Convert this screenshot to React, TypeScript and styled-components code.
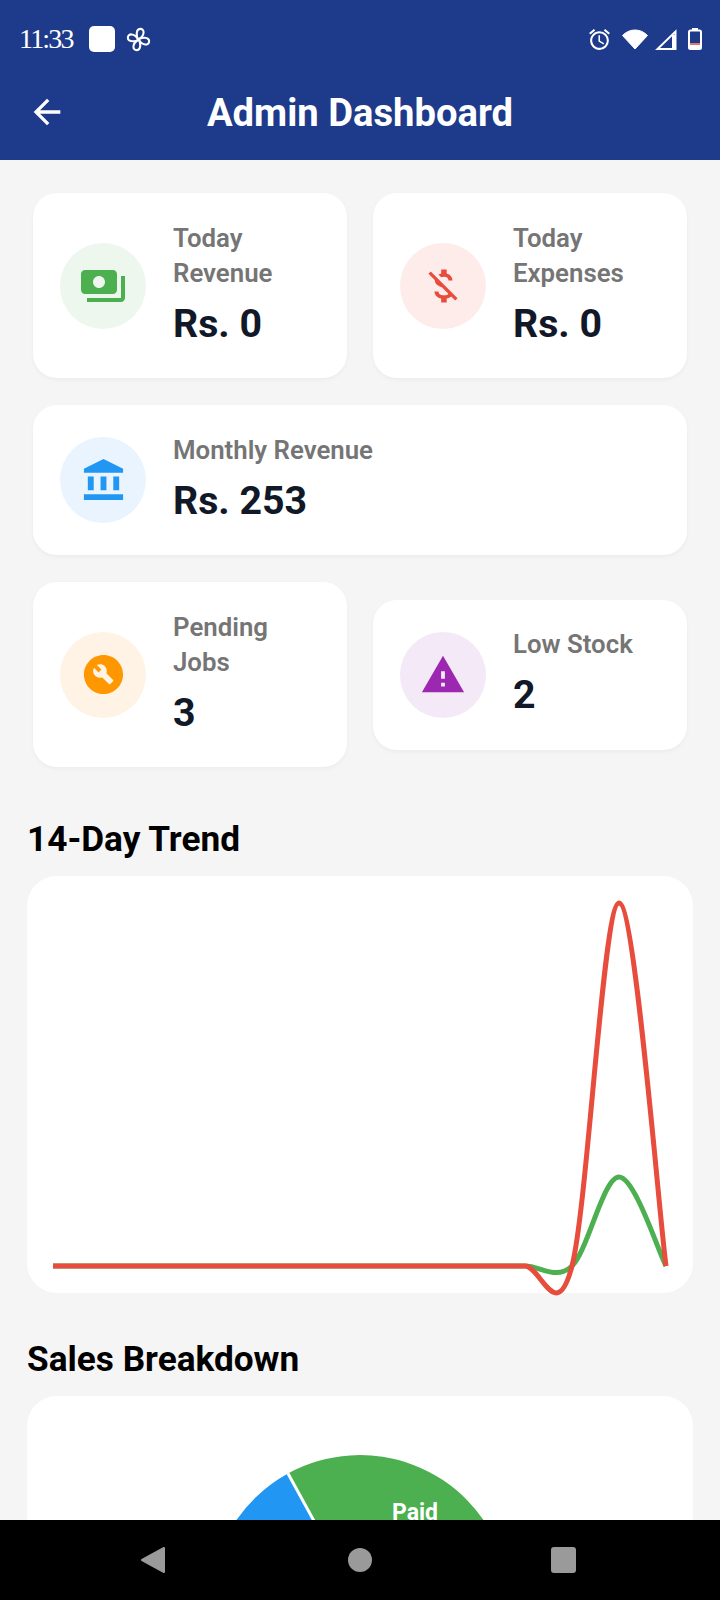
import React from "react";
import styled, { createGlobalStyle } from "styled-components";
import {
  MdAccountBalance,
  MdAlarm,
  MdArrowBack,
  MdBuildCircle,
  MdMoneyOff,
  MdPayments,
  MdWarning,
} from "react-icons/md";

const GlobalStyle = createGlobalStyle`
  html, body {
    margin: 0;
    padding: 0;
    background: #f5f5f5;
  }
  body {
    font-family: Roboto, "Liberation Sans", sans-serif;
  }
`;

const Screen = styled.div`
  width: 720px;
  height: 1600px;
  display: flex;
  flex-direction: column;
  overflow: hidden;
`;

const Header = styled.header`
  height: 160px;
  flex: none;
  background: #1e3a8a;
  color: #fff;
  display: flex;
  flex-direction: column;
`;

const StatusBar = styled.div`
  height: 78px;
  padding: 0 18px 0 19px;
  display: flex;
  align-items: center;
  svg {
    display: block;
  }
`;

const Time = styled.span`
  font-family: "Liberation Serif", serif;
  font-size: 28px;
  letter-spacing: -1.8px;
  margin-right: 16px;
`;

const WhiteSquare = styled.span`
  width: 26px;
  height: 26px;
  border-radius: 5px;
  background: #fff;
  margin-right: 11px;
`;

const StatusRight = styled.div`
  margin-left: auto;
  display: flex;
  align-items: center;
`;

const StatusSlot = styled.span<{ $gap: number }>`
  margin-left: ${(p) => p.$gap}px;
`;

const Toolbar = styled.div`
  flex: 1;
  position: relative;
  display: flex;
  align-items: center;
  justify-content: center;
  padding-bottom: 12px;
`;

const BackButton = styled.span`
  position: absolute;
  left: 27px;
  top: 14px;
  display: flex;
`;

const Title = styled.h1`
  margin: 0;
  font-size: 38.2px;
  font-weight: 700;
`;

const Content = styled.main`
  flex: 1;
  min-height: 0;
  overflow: hidden;
  padding: 33px 27px 0;
`;

const Row = styled.div`
  display: flex;
  align-items: center;
  gap: 26px;
  margin: 0 6px 27px;
`;

const Card = styled.div`
  flex: 1 1 0;
  min-width: 0;
  background: #fff;
  border-radius: 24px;
  padding: 27.5px 27px;
  display: flex;
  align-items: center;
  gap: 27px;
  box-shadow: 0 2px 4px rgba(0, 0, 0, 0.04);
`;

const IconCircle = styled.div<{ $bg: string; $fg: string }>`
  width: 86px;
  height: 86px;
  flex: none;
  border-radius: 50%;
  background: ${(p) => p.$bg};
  color: ${(p) => p.$fg};
  display: flex;
  align-items: center;
  justify-content: center;
`;

const Label = styled.div`
  font-size: 25.8px;
  line-height: 35px;
  font-weight: 600;
  color: #757575;
`;

const Value = styled.div`
  margin-top: 6px;
  font-size: 39.3px;
  line-height: 54px;
  font-weight: 700;
  color: #111827;
`;

const SectionTitle = styled.h2<{ $top: number }>`
  margin: ${(p) => p.$top}px 0 15px;
  font-size: 35.2px;
  line-height: 44px;
  font-weight: 700;
  color: #000;
`;

const Panel = styled.section`
  background: #fff;
  border-radius: 30px;
  svg {
    display: block;
    overflow: visible;
  }
`;

const NavBar = styled.nav`
  height: 80px;
  flex: none;
  background: #000;
  svg {
    display: block;
  }
`;

const Pinwheel = () => (
  <svg width="25" height="25" viewBox="0 0 24 24" fill="none" stroke="#fff" strokeWidth="2">
    {[0, 90, 180, 270].map((a) => (
      <path
        key={a}
        transform={`rotate(${a} 12 12)`}
        d="M12 12C9.5 9.5 9.5 2 13.5 1.8C18 1.6 18.5 8 12 12Z"
      />
    ))}
  </svg>
);

const WifiIcon = () => (
  <svg width="26" height="20" viewBox="0 0 26 20">
    <path d="M13 20L0.5 6.5C4 3 8 1 13 1C18 1 22 3 25.5 6.5Z" fill="#fff" stroke="#fff" strokeLinejoin="round" />
  </svg>
);

const SignalIcon = () => (
  <svg width="22" height="21" viewBox="0 0 22 21">
    <path d="M20.5 2.5V20H2.5Z" fill="none" stroke="#fff" strokeWidth="2" />
    <rect x="17" y="6" width="4" height="14" fill="#fff" />
  </svg>
);

const BatteryIcon = () => (
  <svg width="14" height="22" viewBox="0 0 14 22">
    <rect x="4" y="0" width="6" height="3" fill="#fff" />
    <rect x="1" y="2.5" width="12" height="18.5" rx="1.5" fill="none" stroke="#fff" strokeWidth="2" />
    <rect x="2" y="15" width="10" height="2" fill="#e57373" />
    <rect x="2" y="17" width="10" height="3" fill="#fff" />
  </svg>
);

// last three days follow a catmull-rom curve, the rest of the line is flat
function trendPath(peak: number) {
  const base = 390;
  const lift = (base - peak) / 6;
  return [
    `M26 ${base}H498`,
    `C513.67 ${base} 529.33 ${base + lift} 545 ${base}`,
    `C560.67 ${base - lift} 576.33 ${peak} 592 ${peak}`,
    `C607.67 ${peak} 631.17 ${base - lift} 639 ${base}`,
  ].join("");
}

const TrendChart = () => (
  <svg width="666" height="417" viewBox="0 0 666 417" fill="none" strokeWidth="5" strokeLinejoin="round">
    <path d={trendPath(301)} stroke="#4caf50" />
    <path d={trendPath(27)} stroke="#e74c3c" />
  </svg>
);

const PieChart = () => (
  <svg width="666" height="420" viewBox="0 0 666 420">
    <path d="M333 209L183 209A150 150 0 0 1 261 77.5Z" fill="#2196f3" />
    <path d="M333 209L261 77.5A150 150 0 1 1 183 209Z" fill="#4caf50" />
    <path d="M333 209L261 77.5" stroke="#fff" strokeWidth="3" />
    <text x="388" y="124" fontFamily="Roboto" fontSize="23" fontWeight="700" fill="#fff" textAnchor="middle">
      Paid
    </text>
  </svg>
);

export default function App() {
  return (
    <Screen>
      <GlobalStyle />
      <Header>
        <StatusBar>
          <Time>11:33</Time>
          <WhiteSquare />
          <Pinwheel />
          <StatusRight>
            <StatusSlot $gap={0}><MdAlarm size={25} /></StatusSlot>
            <StatusSlot $gap={10}><WifiIcon /></StatusSlot>
            <StatusSlot $gap={7}><SignalIcon /></StatusSlot>
            <StatusSlot $gap={11}><BatteryIcon /></StatusSlot>
          </StatusRight>
        </StatusBar>
        <Toolbar>
          <BackButton>
            <MdArrowBack size={40} />
          </BackButton>
          <Title>Admin Dashboard</Title>
        </Toolbar>
      </Header>
      <Content>
        <Row>
          <Card>
            <IconCircle $bg="#edf7ee" $fg="#4caf50"><MdPayments size={48} /></IconCircle>
            <div>
              <Label>Today Revenue</Label>
              <Value>Rs. 0</Value>
            </div>
          </Card>
          <Card>
            <IconCircle $bg="#fdecea" $fg="#e74c3c"><MdMoneyOff size={44} /></IconCircle>
            <div>
              <Label>Today Expenses</Label>
              <Value>Rs. 0</Value>
            </div>
          </Card>
        </Row>
        <Row>
          <Card>
            <IconCircle $bg="#e9f4fe" $fg="#2196f3"><MdAccountBalance size={47} /></IconCircle>
            <div>
              <Label>Monthly Revenue</Label>
              <Value>Rs. 253</Value>
            </div>
          </Card>
        </Row>
        <Row>
          <Card>
            <IconCircle $bg="#fff3e5" $fg="#ff9800"><MdBuildCircle size={47} /></IconCircle>
            <div>
              <Label>Pending Jobs</Label>
              <Value>3</Value>
            </div>
          </Card>
          <Card>
            <IconCircle $bg="#f4e9f7" $fg="#9c27b0"><MdWarning size={46} /></IconCircle>
            <div>
              <Label>Low Stock</Label>
              <Value>2</Value>
            </div>
          </Card>
        </Row>
        <SectionTitle $top={50}>14-Day Trend</SectionTitle>
        <Panel>
          <TrendChart />
        </Panel>
        <SectionTitle $top={44}>Sales Breakdown</SectionTitle>
        <Panel>
          <PieChart />
        </Panel>
      </Content>
      <NavBar>
        <svg width="720" height="80" viewBox="0 0 720 80">
          <path d="M164 28V52L142 40Z" fill="#9a9a9a" stroke="#9a9a9a" strokeWidth="2" strokeLinejoin="round" />
          <circle cx="360" cy="40" r="12" fill="#9a9a9a" />
          <rect x="551" y="27" width="25" height="26" rx="3" fill="#9a9a9a" />
        </svg>
      </NavBar>
    </Screen>
  );
}
